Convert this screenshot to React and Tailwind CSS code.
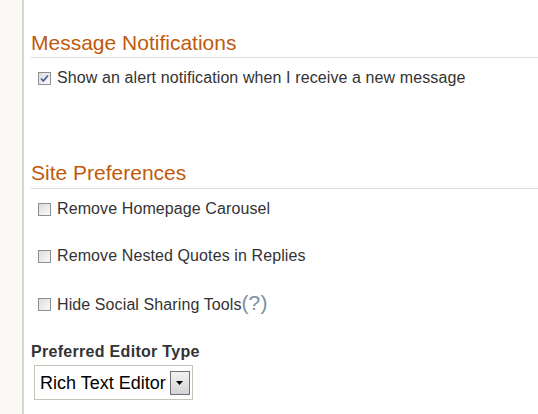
import React from "react";

function Box({ checked }) {
  return (
    <span className="inline-flex h-[13px] w-[13px] shrink-0 items-center justify-center border border-[#8e8f8f] bg-gradient-to-br from-[#dcdcdc] to-[#fbfbfb]">
      {checked && (
        <svg width="9" height="9" viewBox="0 0 9 9">
          <path d="M1 4.5 L3.3 7 L8 1.5" fill="none" stroke="#4a5f97" strokeWidth="1.8" />
        </svg>
      )}
    </span>
  );
}

function Row({ checked, children, className = "" }) {
  return (
    <div className={`flex items-center gap-[6px] pl-[7px] text-[16px] leading-[18px] tracking-[0.1px] text-[#333] ${className}`}>
      <Box checked={checked} />
      <span>{children}</span>
    </div>
  );
}

export default function App() {
  return (
    <div className="flex h-[414px] w-[538px] overflow-hidden bg-white font-['Liberation_Sans',Arial,sans-serif]">
      <div className="w-[24px] shrink-0 border-r-2 border-[#d9d6cc] bg-[#f9f8f5]" />
      <div className="flex-1 pl-[7px]">
        <h2 className="mt-[31px] text-[21px] leading-[24px] text-[#c05a0b]">Message Notifications</h2>
        <div className="mt-[2px] h-px bg-[#dcdad2]" />
        <Row checked className="mt-[11px]">Show an alert notification when I receive a new message</Row>

        <h2 className="mt-[74px] text-[21px] leading-[24px] text-[#c05a0b]">Site Preferences</h2>
        <div className="mt-[3px] h-px bg-[#dcdad2]" />
        <Row className="mt-[11px]">Remove Homepage Carousel</Row>
        <Row className="mt-[29px]">Remove Nested Quotes in Replies</Row>
        <Row className="mt-[29px]">
          <span>Hide Social Sharing Tools</span>
          <span className="text-[21px] leading-[18px] text-[#7d8fa3]">(?)</span>
        </Row>

        <div className="mt-[29px] text-[16px] font-bold leading-[18px] tracking-[0.3px] text-[#333]">Preferred Editor Type</div>
        <div className="ml-[3px] mt-[4px] flex h-[35px] w-[159px] items-center gap-[4px] border border-[#c6c4b6] pl-[5px]">
          <span className="whitespace-nowrap text-[18px] leading-[20px] text-black">Rich Text Editor</span>
          <span className="flex h-[24px] w-[20px] shrink-0 items-center justify-center border border-[#707070] bg-gradient-to-b from-[#f2f2f2] to-[#d4d4d4]">
            <svg width="7" height="4" viewBox="0 0 7 4">
              <path d="M0 0 H7 L3.5 4 Z" fill="#000" />
            </svg>
          </span>
        </div>
      </div>
    </div>
  );
}
